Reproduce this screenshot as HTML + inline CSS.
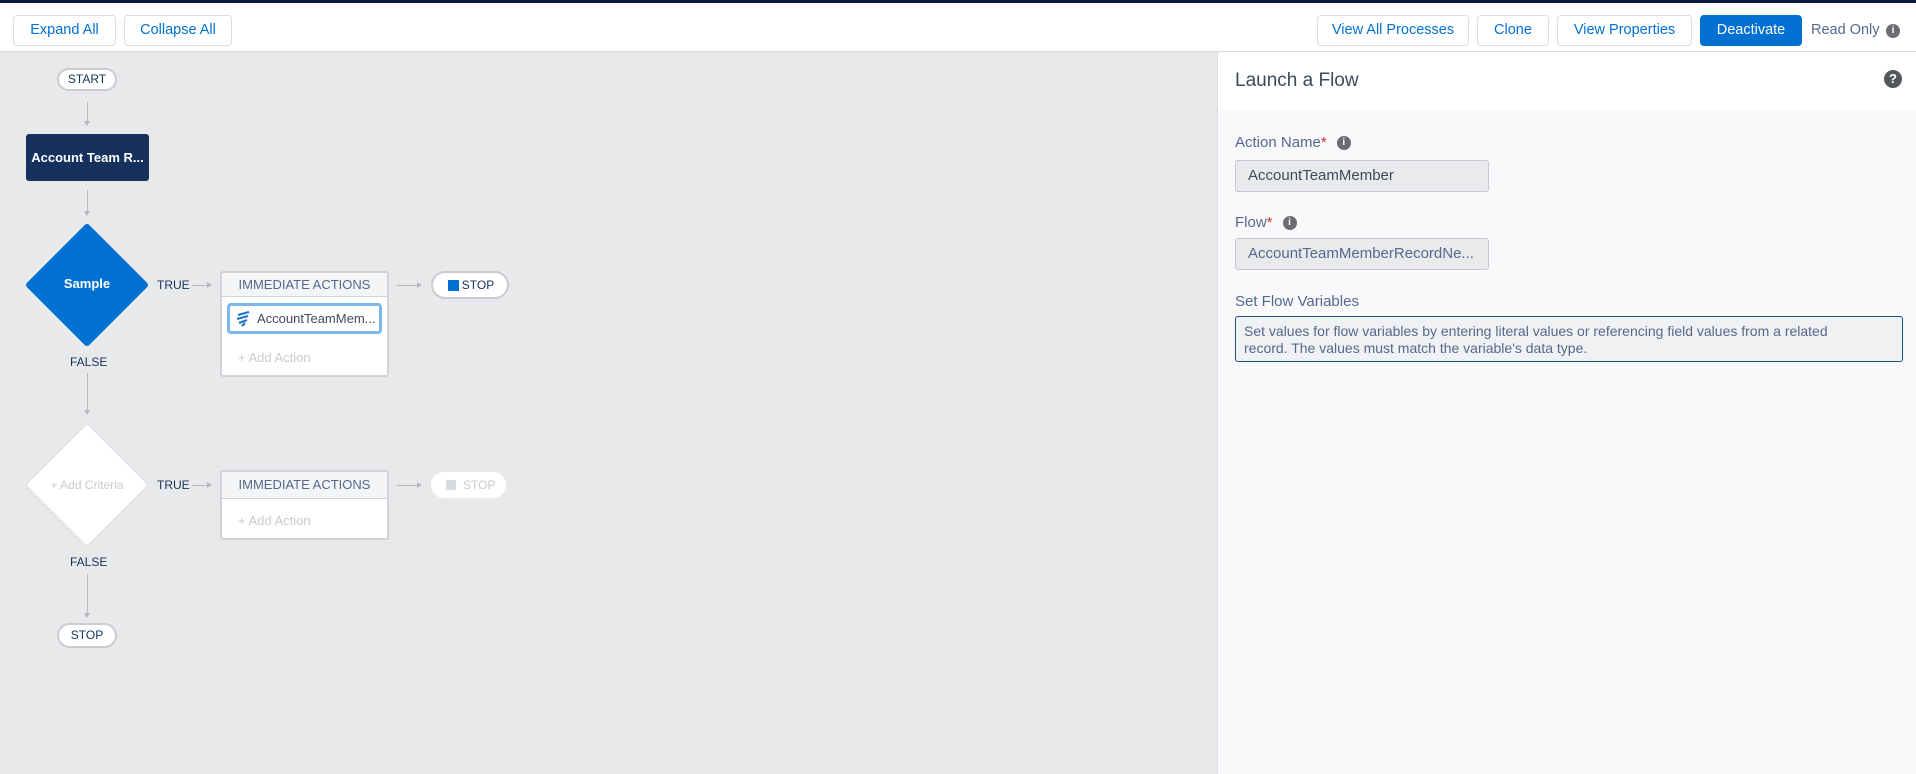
<!DOCTYPE html>
<html><head><meta charset="utf-8"><style>
*{box-sizing:border-box;margin:0;padding:0}
body{width:1916px;height:774px;overflow:hidden;font-family:"Liberation Sans",sans-serif;background:#e8e9eb;position:relative;color:#16325c}
.a{position:absolute}
.top{left:0;top:0;width:1916px;height:52px;background:#fff;border-top:3px solid #0c1a3a;border-bottom:1px solid #d8dde6}
.btn{position:absolute;top:12px;height:31px;border:1px solid #d8dde6;border-radius:4px;background:#fff;color:#0070d2;font-size:14.5px;line-height:29px;text-align:center;white-space:nowrap}
.pill{position:absolute;background:#fff;border:2px solid #c9ccd1;border-radius:14px;font-size:12px;color:#16325c;text-align:center}
.vl{position:absolute;width:1px;background:#b5b8bd}
.vl:after{content:"";position:absolute;left:-3px;bottom:-2px;border-left:3.5px solid transparent;border-right:3.5px solid transparent;border-top:5px solid #b5b8bd}
.hl{position:absolute;height:1px;background:#b5b8bd}
.hl:after{content:"";position:absolute;right:-2px;top:-3px;border-top:3.5px solid transparent;border-bottom:3.5px solid transparent;border-left:5px solid #b5b8bd}
.lbl{position:absolute;font-size:12px;color:#16325c}
.ia{position:absolute;background:#fff;border:2px solid #d0d3d8;border-radius:3px}
.iah{height:24px;background:#f4f5f6;border-bottom:1px solid #d0d3d8;text-align:center;font-size:13px;color:#54698d;line-height:23px}
.panel{left:1217px;top:52px;width:699px;height:722px;background:#f9f9fb;border-left:1px solid #d8dde6}
.fl{position:absolute;left:17px;font-size:15px;color:#54698d;white-space:nowrap}
.inp{position:absolute;left:17px;width:254px;height:32px;background:#e9eaec;border:1px solid #c5c9cf;border-radius:3px;font-size:15px;color:#3e4a5c;line-height:30px;padding-left:12px;white-space:nowrap}
.info{display:inline-block;width:14px;height:14px;border-radius:50%;background:#6b6d70;color:#fff;font-size:10px;font-weight:bold;text-align:center;line-height:14px;vertical-align:middle;margin-left:10px}
</style></head><body>
<div class="a top">
<div class="btn" style="left:13px;width:103px">Expand All</div>
<div class="btn" style="left:124px;width:108px">Collapse All</div>
<div class="btn" style="left:1317px;width:152px">View All Processes</div>
<div class="btn" style="left:1477px;width:72px">Clone</div>
<div class="btn" style="left:1557px;width:135px">View Properties</div>
<div class="btn" style="left:1700px;width:102px;background:#0070d2;border-color:#0070d2;color:#fff">Deactivate</div>
<div class="a" style="left:1811px;top:19px;font-size:14.5px;color:#54698d;white-space:nowrap">Read Only</div>
<div class="a info" style="left:1886px;top:21px;margin:0">i</div>
</div>

<div class="pill" style="left:57px;top:68px;width:60px;height:23px;line-height:19px">START</div>
<div class="vl" style="left:87px;top:102px;height:22px"></div>
<div class="a" style="left:26px;top:134px;width:123px;height:47px;background:#16325c;border-radius:3px;color:#fff;font-size:13px;font-weight:bold;text-align:center;line-height:47px">Account Team R...</div>
<div class="vl" style="left:87px;top:190px;height:24px"></div>
<div class="a" style="left:43px;top:241px;width:88px;height:88px;background:#0070d2;transform:rotate(45deg);border-radius:3px"></div>
<div class="a" style="left:25px;top:276px;width:124px;text-align:center;color:#fff;font-size:13px;font-weight:bold">Sample</div>
<div class="lbl" style="left:157px;top:278px">TRUE</div>
<div class="hl" style="left:192px;top:285px;width:18px"></div>
<div class="ia" style="left:220px;top:271px;width:169px;height:106px">
<div class="iah">IMMEDIATE ACTIONS</div>
<div class="a" style="left:5px;top:30px;width:155px;height:31px;border:3px solid #7fb7ea;border-radius:4px;background:#fff;font-size:13px;color:#3e4a5c;line-height:25px;padding-left:27px;white-space:nowrap">
<svg class="a" style="left:6px;top:5px" width="15" height="16" viewBox="0 0 15 16"><path d="M2 4 L13 1 M1 8 L12 5 M3 12 L11 9 M6 15 L9 12" stroke="#1e75c7" stroke-width="2.2" fill="none"/></svg>AccountTeamMem...</div>
<div class="a" style="left:16px;top:77px;font-size:13px;color:#c6cbd1">+ Add Action</div>
</div>
<div class="hl" style="left:397px;top:285px;width:23px"></div>
<div class="pill" style="left:431px;top:271px;width:78px;height:28px;line-height:24px;padding-left:16px">STOP<span class="a" style="left:15px;top:7px;width:11px;height:11px;background:#0070d2"></span></div>
<div class="lbl" style="left:70px;top:355px">FALSE</div>
<div class="vl" style="left:87px;top:373px;height:40px"></div>

<div class="a" style="left:43px;top:441px;width:88px;height:88px;background:#fff;transform:rotate(45deg);border-radius:3px;border:1px solid #d8dde6"></div>
<div class="a" style="left:25px;top:478px;width:124px;text-align:center;color:#c6cbd1;font-size:12px">+ Add Criteria</div>
<div class="lbl" style="left:157px;top:478px">TRUE</div>
<div class="hl" style="left:192px;top:485px;width:18px"></div>
<div class="ia" style="left:220px;top:470px;width:169px;height:70px">
<div class="iah" style="line-height:25px;height:27px">IMMEDIATE ACTIONS</div>
<div class="a" style="left:16px;top:41px;font-size:13px;color:#c6cbd1">+ Add Action</div>
</div>
<div class="hl" style="left:397px;top:485px;width:23px"></div>
<div class="a" style="left:431px;top:472px;width:75px;height:26px;background:#fff;border-radius:13px;color:#c6cbd1;font-size:12px;line-height:26px;padding-left:32px">STOP<span class="a" style="left:15px;top:8px;width:10px;height:10px;background:#d8dbdf"></span></div>
<div class="lbl" style="left:70px;top:555px">FALSE</div>
<div class="vl" style="left:87px;top:574px;height:42px"></div>
<div class="pill" style="left:57px;top:623px;width:60px;height:25px;line-height:21px">STOP</div>

<div class="a panel">
<div class="a" style="left:0;top:0;width:699px;height:58px;background:#fff"></div>
<div class="a" style="left:17px;top:18px;font-size:19px;color:#3e4a5c">Launch a Flow</div>
<div class="a" style="left:666px;top:18px;width:18px;height:18px;border-radius:50%;background:#54575c;color:#fff;font-size:13px;font-weight:bold;text-align:center;line-height:18px">?</div>
<div class="fl" style="top:82px">Action Name<span style="color:#c23934">*</span><span class="info">i</span></div>
<div class="inp" style="top:108px">AccountTeamMember</div>
<div class="fl" style="top:162px">Flow<span style="color:#c23934">*</span><span class="info">i</span></div>
<div class="inp" style="top:186px;color:#54698d">AccountTeamMemberRecordNe...</div>
<div class="fl" style="top:241px">Set Flow Variables</div>
<div class="a" style="left:17px;top:264px;width:668px;height:46px;background:#f0f1f3;border:1px solid #1b5297;border-radius:3px;font-size:14px;color:#54698d;padding:6px 8px 6px 8px;line-height:17px"><div style="width:625px">Set values for flow variables by entering literal values or referencing field values from a related record. The values must match the variable's data type.</div></div>
</div>
</body></html>
